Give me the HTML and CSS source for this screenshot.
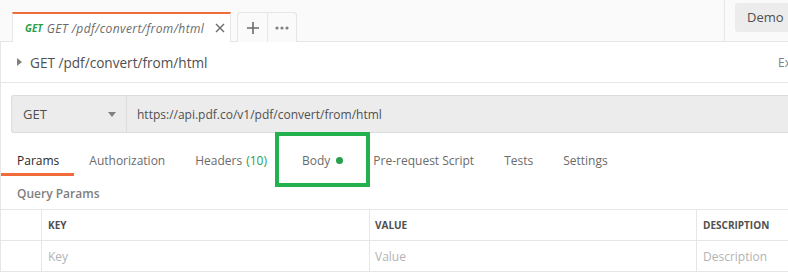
FILE: index.html
```html
<!DOCTYPE html>
<html lang="en">
<head>
    <meta charset="UTF-8">
    <title>GET /pdf/convert/from/html</title>
    <link rel="stylesheet" href="styles.css">
</head>
<body>
    <div class="topbar">
        <div class="tab active">
            <span class="tab-method">GET</span>
            <span class="tab-title">GET /pdf/convert/from/html</span>
            <svg class="tab-close" width="10" height="10" viewBox="0 0 10 10"><path d="M1 1L9 9M9 1L1 9" stroke="#6b6b6b" stroke-width="1.4"/></svg>
        </div>
        <div class="tab-btn plus">
            <svg width="12" height="12" viewBox="0 0 12 12"><path d="M6 0V12M0 6H12" stroke="#6b6b6b" stroke-width="1.6"/></svg>
        </div>
        <div class="tab-btn dots">
            <svg width="14" height="4" viewBox="0 0 14 4"><circle cx="2" cy="2" r="1.6" fill="#808080"/><circle cx="7" cy="2" r="1.6" fill="#808080"/><circle cx="12" cy="2" r="1.6" fill="#808080"/></svg>
        </div>
        <div class="spacer"></div>
        <div class="env">
            <div class="env-btn">Demo</div>
        </div>
    </div>

    <div class="main">
        <div class="request-title">
            <svg class="caret" width="5" height="8" viewBox="0 0 5 8"><path d="M0 0L5 4L0 8Z" fill="#808080"/></svg>
            <span>GET /pdf/convert/from/html</span>
            <span class="spacer"></span>
            <span class="examples">Ex</span>
        </div>

        <div class="url-bar">
            <div class="method">
                <span>GET</span>
                <svg width="8" height="5" viewBox="0 0 8 5"><path d="M0 0H8L4 5Z" fill="#808080"/></svg>
            </div>
            <div class="url">https://api.pdf.co/v1/pdf/convert/from/html</div>
        </div>

        <div class="req-tabs">
            <div class="req-tab current">Params</div>
            <div class="req-tab">Authorization</div>
            <div class="req-tab">Headers <span class="count">(10)</span></div>
            <div class="req-tab body-tab">Body <span class="dot"></span></div>
            <div class="req-tab">Pre-request Script</div>
            <div class="req-tab">Tests</div>
            <div class="req-tab">Settings</div>
            <div class="highlight"></div>
        </div>

        <div class="section-label">Query Params</div>

        <div class="params">
            <div class="row head">
                <div class="cell check"></div>
                <div class="cell key">KEY</div>
                <div class="cell value">VALUE</div>
                <div class="cell desc">DESCRIPTION</div>
            </div>
            <div class="row">
                <div class="cell check"></div>
                <div class="cell key placeholder">Key</div>
                <div class="cell value placeholder">Value</div>
                <div class="cell desc placeholder">Description</div>
            </div>
        </div>
    </div>
</body>
</html>
```

FILE: styles.css
```css
body {
    margin: 0;
    font-family: "Open Sans", "Liberation Sans", sans-serif;
    color: #505050;
    background: #ffffff;
    overflow: hidden;
}
.spacer {
    flex: 1;
}
.topbar {
    height: 42px;
    display: flex;
    align-items: flex-end;
    padding-left: 12px;
    background: #fafafa;
    box-shadow: inset 0 -1px 0 #e6e6e6;
}
.tab {
    height: 30px;
    box-sizing: border-box;
    display: flex;
    align-items: center;
    background: #fff;
    border-left: 1px solid #e6e6e6;
    border-right: 1px solid #e6e6e6;
}
.tab.active {
    width: 219px;
    border-top: 2px solid #f26b3a;
    padding: 0 0 0 12px;
}
.tab-method {
    font-size: 10px;
    font-weight: 700;
    font-style: italic;
    color: #26a04a;
    margin-right: 4px;
}
.tab-title {
    font-size: 12px;
    letter-spacing: 0.4px;
    font-style: italic;
    color: #6b6b6b;
    white-space: nowrap;
}
.tab-close {
    margin-left: auto;
    margin-right: 5px;
    flex-shrink: 0;
}
.tab-btn {
    height: 30px;
    box-sizing: border-box;
    display: flex;
    align-items: center;
    justify-content: center;
    border: 1px solid #e6e6e6;
    border-bottom: none;
    background: #fafafa;
}
.tab-btn.plus {
    width: 31px;
    margin-left: 6px;
    border-radius: 3px 0 0 0;
}
.tab-btn.dots {
    width: 29px;
    border-left: none;
    border-radius: 0 3px 0 0;
}
.env {
    width: 64px;
    height: 42px;
    align-self: stretch;
    border-left: 1px solid #e6e6e6;
    padding: 3px 0 0 10px;
    box-sizing: border-box;
}
.env-btn {
    height: 29px;
    line-height: 29px;
    background: #ececec;
    border-radius: 3px 0 0 3px;
    padding-left: 12px;
    font-size: 13px;
    color: #505050;
    white-space: nowrap;
}
.main {
    border-left: 1px solid #e6e6e6;
}
.request-title {
    height: 40px;
    display: flex;
    align-items: center;
    padding-left: 16px;
    border-bottom: 1px solid #e6e6e6;
    font-size: 13.6px;
    color: #505050;
}
.caret {
    margin-right: 8px;
}
.examples {
    font-size: 12px;
    color: #808080;
    width: 10px;
    overflow: hidden;
}
.url-bar {
    display: flex;
    height: 36px;
    margin: 12px 0 0 10px;
    background: #ececec;
    border: 1px solid #dcdcdc;
    border-right: none;
    border-radius: 3px 0 0 3px;
    font-size: 12px;
    color: #505050;
}
.method {
    width: 115px;
    box-sizing: border-box;
    display: flex;
    align-items: center;
    padding: 0 10px 0 11px;
    border-right: 1px solid #dcdcdc;
    font-size: 13px;
}
.method svg {
    margin-left: auto;
}
.url {
    display: flex;
    align-items: center;
    padding-left: 10px;
}
.req-tabs {
    position: relative;
    display: flex;
    height: 31px;
    margin-top: 12px;
    font-size: 12px;
    color: #6b6b6b;
}
.req-tab {
    display: flex;
    align-items: center;
    padding: 0 15px;
    white-space: nowrap;
}
.req-tab.current {
    color: #282828;
    box-shadow: inset 0 -3px 0 #f26b3a;
    padding: 0 15px 0 16px;
}
.req-tab.body-tab {
    padding: 0 15px 0 20px;
}
.count {
    color: #26a04a;
    margin-left: 4px;
}
.dot {
    display: inline-block;
    width: 7px;
    height: 7px;
    border-radius: 50%;
    background: #26a04a;
    margin-left: 6px;
}
.highlight {
    position: absolute;
    left: 274px;
    top: -13px;
    width: 87px;
    height: 47px;
    border: 4px solid #22b14c;
}
.section-label {
    height: 33px;
    line-height: 36px;
    padding-left: 16px;
    font-size: 12px;
    font-weight: 600;
    color: #808080;
}
.params {
    border-top: 1px solid #e6e6e6;
    margin-left: -1px;
}
.row {
    display: flex;
    height: 30px;
    border-bottom: 1px solid #e6e6e6;
}
.cell {
    display: flex;
    align-items: center;
    box-sizing: border-box;
    padding-left: 6px;
    border-right: 1px solid #e6e6e6;
    font-size: 12px;
    white-space: nowrap;
    overflow: hidden;
}
.cell.check { width: 42px; padding: 0; }
.cell.key { width: 328px; }
.cell.value { width: 327px; padding-left: 5px; }
.cell.desc { flex: 1; border-right: none; padding-left: 6px; }
.row.head .cell {
    font-size: 10px;
    font-weight: 700;
    color: #505050;
}
.placeholder {
    color: #b3b3b3;
}
```
